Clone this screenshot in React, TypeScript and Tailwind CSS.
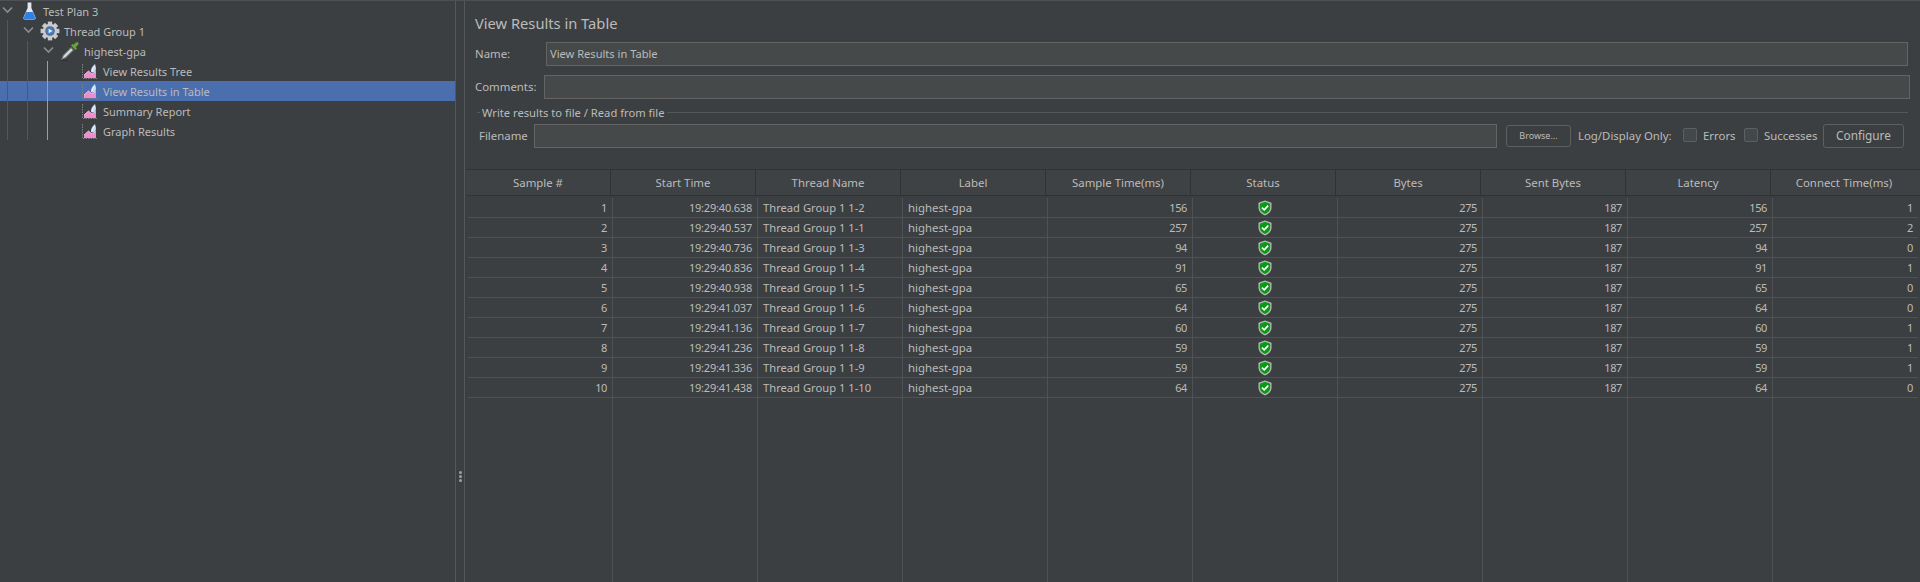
import React from "react";

const cols = ["Sample #", "Start Time", "Thread Name", "Label", "Sample Time(ms)", "Status", "Bytes", "Sent Bytes", "Latency", "Connect Time(ms)"];
const rows: (string | number)[][] = [
  [1, "19:29:40.638", "Thread Group 1 1-2", "highest-gpa", 156, "", 275, 187, 156, 1],
  [2, "19:29:40.537", "Thread Group 1 1-1", "highest-gpa", 257, "", 275, 187, 257, 2],
  [3, "19:29:40.736", "Thread Group 1 1-3", "highest-gpa", 94, "", 275, 187, 94, 0],
  [4, "19:29:40.836", "Thread Group 1 1-4", "highest-gpa", 91, "", 275, 187, 91, 1],
  [5, "19:29:40.938", "Thread Group 1 1-5", "highest-gpa", 65, "", 275, 187, 65, 0],
  [6, "19:29:41.037", "Thread Group 1 1-6", "highest-gpa", 64, "", 275, 187, 64, 0],
  [7, "19:29:41.136", "Thread Group 1 1-7", "highest-gpa", 60, "", 275, 187, 60, 1],
  [8, "19:29:41.236", "Thread Group 1 1-8", "highest-gpa", 59, "", 275, 187, 59, 1],
  [9, "19:29:41.336", "Thread Group 1 1-9", "highest-gpa", 59, "", 275, 187, 59, 1],
  [10, "19:29:41.438", "Thread Group 1 1-10", "highest-gpa", 64, "", 275, 187, 64, 0],
];

function Chevron() {
  return (
    <svg width="11" height="8" viewBox="0 0 11 8" className="mb-[3px] shrink-0">
      <path d="M1 1.5 L5.5 6 L10 1.5" fill="none" stroke="#8b8e91" strokeWidth="1.6" />
    </svg>
  );
}

function Flask() {
  return (
    <svg width="13" height="18" viewBox="0 0 13 18" className="shrink-0">
      <path d="M4.6 0.5 H8.4 V6 L12.6 15.5 Q13 17.5 11 17.5 H2 Q0 17.5 0.4 15.5 L4.6 6 Z" fill="#e4e8ee" />
      <path d="M3.2 10 H9.8 L12.2 15.5 Q12.5 17 11 17 H2 Q0.5 17 0.8 15.5 Z" fill="#2f80e0" />
    </svg>
  );
}

function Gear() {
  const teeth = [0, 45, 90, 135, 180, 225, 270, 315];
  return (
    <svg width="20" height="20" viewBox="0 0 20 20" className="shrink-0">
      {teeth.map((a) => (
        <rect key={a} x="7.8" y="0.6" width="4.4" height="4" fill="#c9cbce" transform={`rotate(${a} 10 10)`} />
      ))}
      <circle cx="10" cy="10" r="7.2" fill="#c9cbce" />
      <circle cx="10" cy="10" r="4.8" fill="#5a6a80" />
      <circle cx="10" cy="10" r="3.6" fill="#3f7fd0" />
      <path d="M8.6 7.8 L12.6 10 L8.6 12.2 Z" fill="#e8eef6" />
    </svg>
  );
}

function Dropper() {
  return (
    <svg width="20" height="20" viewBox="0 0 20 20" className="shrink-0">
      <path d="M1 19 L3 14 L11 6 L14 9 L6 17 Z" fill="#75787b" />
      <path d="M2.5 17.5 L4 14.5 L11 7.5 L12.6 9 L5.5 16 Z" fill="#d8dadc" />
      <path d="M11 4.5 L15.5 9 L17 7.5 L15.8 6.3 L18.4 3.6 Q19 1.6 17.6 1 Q16.2 0.8 13.8 3.4 L12.6 3 Z" fill="#6a9f3c" />
      <path d="M1 19.5 H8" stroke="#2f3132" strokeWidth="1" />
    </svg>
  );
}

function Listener() {
  return (
    <svg width="16" height="16" viewBox="0 0 16 16" className="shrink-0">
      <path d="M0.5 1 V15.5 H15" fill="none" stroke="#7d8083" strokeWidth="1" strokeDasharray="1.5 1" />
      <path d="M2 15 V12 L6.5 8 L10 11 L14 8.5 V15 Z" fill="#f08bd0" />
      <path d="M2 12 L6.5 8 L10 11 L14 8.5" fill="none" stroke="#fbd0ec" strokeWidth="0.8" />
      <path d="M9 9 Q8.4 5 13 1 Q14.6 5 13.6 8 Q12 10.6 9 9 Z" fill="#c4dcf8" />
      <path d="M10 8 Q10.6 5 12.6 3.2" fill="none" stroke="#eef6ff" strokeWidth="1" />
    </svg>
  );
}

function Shield() {
  return (
    <svg width="14" height="16" viewBox="0 0 14 16">
      <path d="M7 0.5 L13.5 2.8 V8 Q13.5 12.5 7 15.5 Q0.5 12.5 0.5 8 V2.8 Z" fill="#b8bcb8" />
      <path d="M7 1.8 L12.2 3.7 V8 Q12.2 11.6 7 14.1 Q1.8 11.6 1.8 8 V3.7 Z" fill="#0a9a16" />
      <path d="M3.9 7.6 L6.2 9.8 L10.2 5.6" fill="none" stroke="#ffffff" strokeWidth="1.7" />
    </svg>
  );
}

function TreeRow({ depth, icon, label, selected, chevron }: { depth: string; icon: React.ReactNode; label: string; selected?: boolean; chevron?: boolean }) {
  return (
    <div className={`flex h-5 items-center ${depth} ${selected ? "bg-[#4b6eaf]" : ""}`}>
      {chevron ? <Chevron /> : null}
      {icon}
      <span className="pt-[2px] text-[11px] leading-[18px] text-[#bbbbbb] whitespace-nowrap">{label}</span>
    </div>
  );
}

function Tree() {
  return (
    <div className="relative w-[455px] shrink-0">
      <TreeRow depth="pl-[2px]" chevron icon={<span className="ml-[10px] mr-[7px] flex"><Flask /></span>} label="Test Plan 3" />
      <TreeRow depth="pl-[23px]" chevron icon={<span className="ml-[6px] mr-[4px] flex"><Gear /></span>} label="Thread Group 1" />
      <TreeRow depth="pl-[43px]" chevron icon={<span className="ml-[6px] mr-[4px] flex"><Dropper /></span>} label="highest-gpa" />
      <TreeRow depth="pl-[82px]" icon={<span className="mr-[5px] flex"><Listener /></span>} label="View Results Tree" />
      <TreeRow depth="pl-[82px]" selected icon={<span className="mr-[5px] flex"><Listener /></span>} label="View Results in Table" />
      <TreeRow depth="pl-[82px]" icon={<span className="mr-[5px] flex"><Listener /></span>} label="Summary Report" />
      <TreeRow depth="pl-[82px]" icon={<span className="mr-[5px] flex"><Listener /></span>} label="Graph Results" />
      <div className="absolute left-[7px] top-[19px] h-[120px] w-px bg-[#55585a]" />
      <div className="absolute left-[27px] top-[40px] h-[99px] w-px bg-[#55585a]" />
      <div className="absolute left-[47px] top-[60px] h-[79px] w-px bg-[#6ea9e6]" />
    </div>
  );
}

function Field({ className }: { className: string }) {
  return <div className={`h-6 border border-[#646464] bg-[#45494a] ${className}`} />;
}

function Form() {
  return (
    <div className="h-[168px] shrink-0 text-[11.4px] text-[#bbbbbb]">
      <div className="pl-[10px] pt-[12px] text-[14.7px] leading-[21px] text-[#bbbbbb]">View Results in Table</div>
      <div className="mt-[8px] flex items-center pl-[10px] pr-[12px]">
        <span className="w-[71px] shrink-0">Name:</span>
        <div className="flex h-6 flex-1 items-center border border-[#646464] bg-[#45494a] pl-[3px] text-[11.1px]">View Results in Table</div>
      </div>
      <div className="mt-[9px] flex items-center pl-[10px] pr-[10px]">
        <span className="w-[69px] shrink-0">Comments:</span>
        <Field className="flex-1" />
      </div>
      <div className="mt-[5px] flex items-center pl-[12px] pr-[12px]">
        <div className="h-px w-[3px] bg-[#55585a]" />
        <span className="px-[2px] text-[11.2px] leading-[17px]">Write results to file / Read from file</span>
        <div className="h-px flex-1 bg-[#55585a]" />
      </div>
      <div className="mt-[3px] flex items-center pl-[14px] pr-[16px]">
        <span className="w-[55px] shrink-0">Filename</span>
        <Field className="w-[963px] shrink-0" />
        <div className="ml-[9px] flex h-[22px] w-[65px] shrink-0 items-center justify-center rounded-[3px] border border-[#5e6060] bg-[#3c3f41] text-[9px]">Browse...</div>
        <span className="ml-[7px] w-[105px] shrink-0 whitespace-nowrap">Log/Display Only:</span>
        <div className="mb-[2px] h-[14px] w-[14px] shrink-0 rounded-[2px] border border-[#5e6060] bg-[#43494a]" />
        <span className="mb-[1px] ml-[6px] w-[41px] shrink-0">Errors</span>
        <div className="mb-[2px] h-[14px] w-[14px] shrink-0 rounded-[2px] border border-[#5e6060] bg-[#43494a]" />
        <span className="mb-[1px] ml-[6px] w-[59px] shrink-0 whitespace-nowrap">Successes</span>
        <div className="flex h-6 w-[81px] shrink-0 items-center justify-center rounded-[3px] border border-[#5e6060] bg-[#3c3f41] text-[11.8px]">Configure</div>
      </div>
    </div>
  );
}

function cellClass(i: number) {
  if (i === 2) return "justify-start pl-[5px] pt-[2px] text-[11.2px]";
  if (i === 3) return "justify-start pl-[5px] text-[11.4px]";
  if (i === 5) return "justify-center";
  if (i === 1) return "justify-end pr-[5px] pt-[2px] text-[11px] tracking-[-0.2px]";
  return "justify-end pr-[5px] pt-[2px] text-[11px] tracking-[-0.4px]";
}

function ResultTable() {
  return (
    <div className="flex min-h-0 flex-1 flex-col text-[11.4px] text-[#bbbbbb]">
      <div className="ml-px flex h-[27px] shrink-0 border-y border-[#323232] bg-[#3f4244]">
        {cols.map((c, i) => (
          <div key={c} className={`flex items-center justify-center ${i === 9 ? "flex-1 pr-[3px]" : "w-[145px] shrink-0 border-r border-[#323232]"}`}>{c}</div>
        ))}
      </div>
      <div className="ml-[3px] mr-[2px] flex flex-1 pt-[2px]">
        {cols.map((c, i) => (
          <div key={c} className={`${i === 9 ? "flex-1" : "w-[145px] shrink-0 border-r border-[#4f5254]"}`}>
            {rows.map((r) => (
              <div key={String(r[0])} className={`flex h-5 items-center border-b border-[#4f5254] ${cellClass(i)}`}>
                {i === 5 ? <Shield /> : r[i]}
              </div>
            ))}
          </div>
        ))}
      </div>
    </div>
  );
}

export default function App() {
  return (
    <div className="flex h-[582px] w-[1920px] overflow-hidden border-t border-[#4f5254] bg-[#3c3f41] font-['Noto_Sans','Open_Sans',sans-serif]">
      <Tree />
      <div className="flex w-[10px] shrink-0 flex-col items-center justify-center gap-[1px] border-x border-[#55585a] pt-[370px]">
        <div className="h-[3px] w-[3px] rounded-full bg-[#a0a0a0]" />
        <div className="h-[3px] w-[3px] rounded-full bg-[#a0a0a0]" />
        <div className="h-[3px] w-[3px] rounded-full bg-[#a0a0a0]" />
      </div>
      <div className="flex min-w-0 flex-1 flex-col">
        <Form />
        <ResultTable />
      </div>
    </div>
  );
}
